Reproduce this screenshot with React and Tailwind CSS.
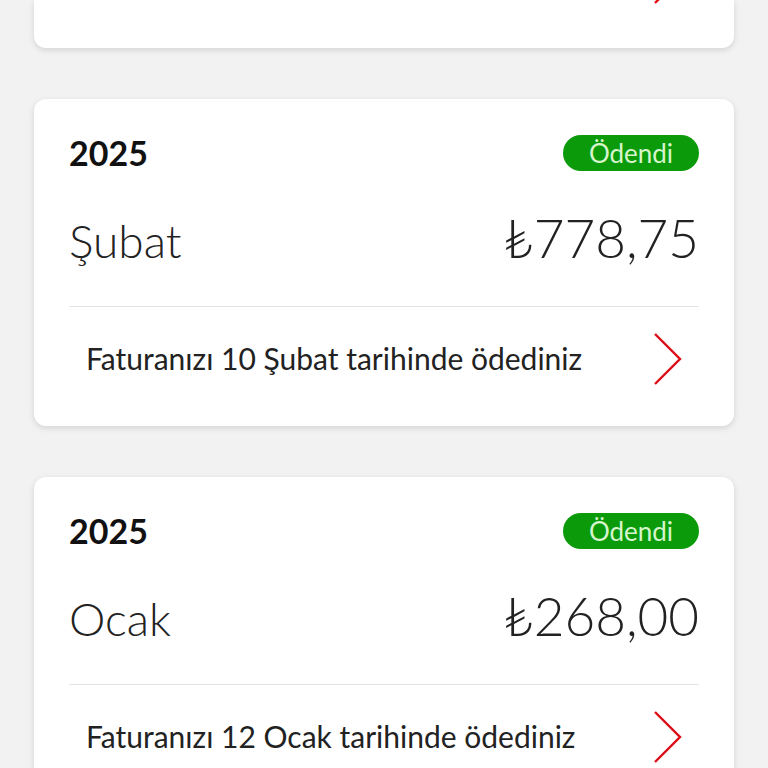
import React from "react";

const bills = [
    { year: "2025", month: "Şubat", amount: "₺778,75", note: "Faturanızı 10 Şubat tarihinde ödediniz" },
    { year: "2025", month: "Ocak", amount: "₺268,00", note: "Faturanızı 12 Ocak tarihinde ödediniz" },
];

const Chevron = () => (
    <svg width="30" height="54" viewBox="0 0 30 54" fill="none" className="shrink-0">
        <path d="M2 2 L27 27 L2 52" stroke="#e00b16" strokeWidth="2.4" strokeLinejoin="miter" />
    </svg>
);

const BillCard = ({ bill }) => (
    <div className="bg-white rounded-[12px] shadow-[0_2px_6px_rgba(0,0,0,0.13)] h-[327px] flex flex-col px-[35px] pt-[36px] shrink-0">
        <div className="flex items-center justify-between h-[36px]">
            <span className="text-[34px] font-bold text-[#111] leading-none">{bill.year}</span>
            <span className="h-[36px] w-[136px] rounded-full bg-[#0a9a0a] text-[#d6f5cc] text-[26px] flex items-center justify-center leading-none">
                Ödendi
            </span>
        </div>
        <div className="flex items-end justify-between h-[135px] pb-[42px]">
            <span className="text-[46px] font-light text-[#222] leading-none">{bill.month}</span>
            <span className="text-[53px] font-light text-[#222] leading-none">{bill.amount}</span>
        </div>
        <div className="h-[1px] bg-[#e3e3e3]"></div>
        <div className="flex items-center justify-between flex-1 pl-[17px] pr-[16px] pb-[16px]">
            <span className="text-[30px] text-[#222]">{bill.note}</span>
            <Chevron />
        </div>
    </div>
);

export default function App() {
    return (
        <div
            className="w-[768px] h-[768px] overflow-hidden bg-[#f2f2f2] px-[34px] flex flex-col gap-[51px]"
            style={{ fontFamily: "Lato, 'Noto Sans', sans-serif" }}
        >
            {/* previous month card, scrolled mostly out of view */}
            <div className="bg-white rounded-b-[12px] shadow-[0_2px_6px_rgba(0,0,0,0.13)] h-[48px] shrink-0 overflow-hidden flex justify-end pr-[51px]">
                <div className="-mt-[49px]">
                    <Chevron />
                </div>
            </div>
            {bills.map((bill) => (
                <BillCard key={bill.month} bill={bill} />
            ))}
        </div>
    );
}
